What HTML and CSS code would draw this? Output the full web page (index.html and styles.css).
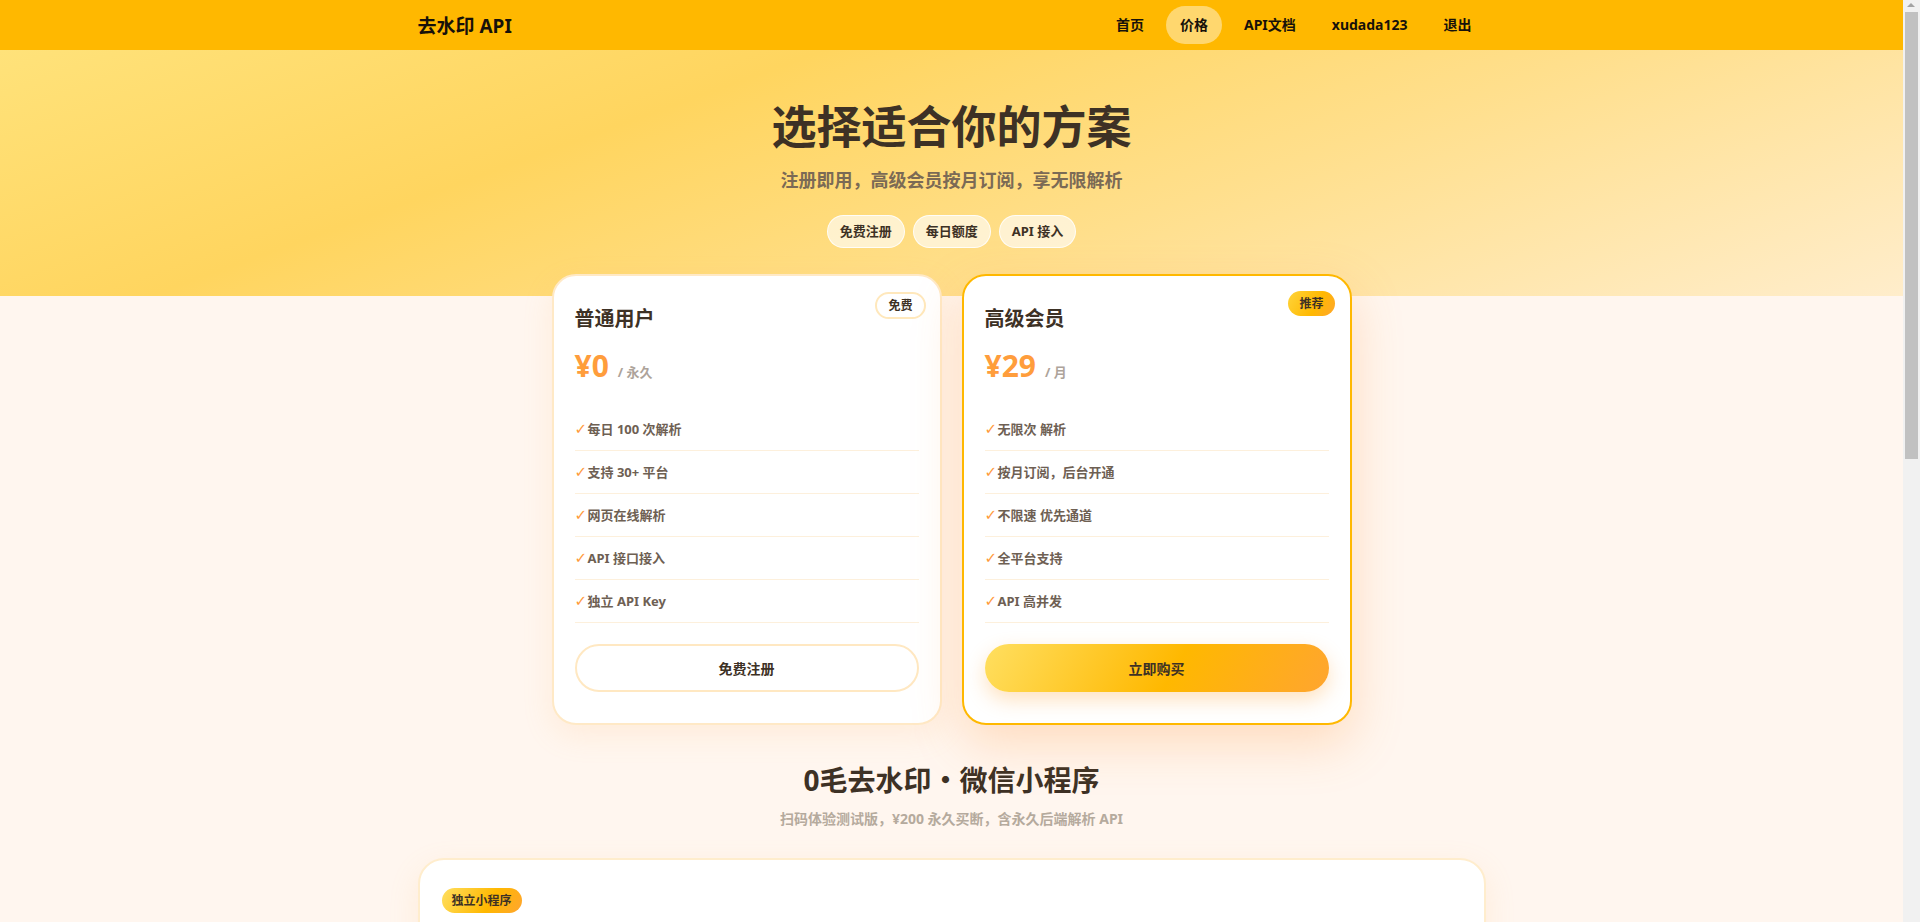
FILE: index.html
```html
<!DOCTYPE html>
<html lang="zh-CN">
<head>
    <meta charset="UTF-8">
    <meta name="viewport" content="width=device-width, initial-scale=1.0">
    <title>价格 - 去水印 API</title>
    <link rel="stylesheet" href="styles.css">
</head>
<body>
    <header class="topbar">
        <div class="container topbar-inner">
            <a class="logo" href="#">去水印 API</a>
            <nav class="nav">
                <a href="#">首页</a>
                <a href="#" class="active">价格</a>
                <a href="#">API文档</a>
                <a href="#">xudada123</a>
                <a href="#">退出</a>
            </nav>
        </div>
    </header>

    <section class="hero">
        <h1>选择适合你的方案</h1>
        <p class="hero-sub">注册即用，高级会员按月订阅，享无限解析</p>
        <div class="hero-tags">
            <span class="tag">免费注册</span>
            <span class="tag">每日额度</span>
            <span class="tag">API 接入</span>
        </div>
    </section>

    <section class="plans">
        <div class="plan">
            <span class="plan-badge">免费</span>
            <h3 class="plan-name">普通用户</h3>
            <div class="plan-price">
                <span class="amount">¥0</span>
                <span class="unit">/ 永久</span>
            </div>
            <ul class="plan-features">
                <li><span class="check">✓</span>每日 100 次解析</li>
                <li><span class="check">✓</span>支持 30+ 平台</li>
                <li><span class="check">✓</span>网页在线解析</li>
                <li><span class="check">✓</span>API 接口接入</li>
                <li><span class="check">✓</span>独立 API Key</li>
            </ul>
            <button type="button" class="plan-btn">免费注册</button>
        </div>

        <div class="plan plan-pro">
            <span class="plan-badge badge-hot">推荐</span>
            <h3 class="plan-name">高级会员</h3>
            <div class="plan-price">
                <span class="amount">¥29</span>
                <span class="unit">/ 月</span>
            </div>
            <ul class="plan-features">
                <li><span class="check">✓</span>无限次 解析</li>
                <li><span class="check">✓</span>按月订阅，后台开通</li>
                <li><span class="check">✓</span>不限速 优先通道</li>
                <li><span class="check">✓</span>全平台支持</li>
                <li><span class="check">✓</span>API 高并发</li>
            </ul>
            <button type="button" class="plan-btn btn-primary">立即购买</button>
        </div>
    </section>

    <section class="mini">
        <h2 class="mini-title">0毛去水印・微信小程序</h2>
        <p class="mini-sub">扫码体验测试版，¥200 永久买断，含永久后端解析 API</p>

        <div class="container">
            <div class="mini-card">
                <span class="mini-badge">独立小程序</span>
                <div class="mini-body">
                    <div class="mini-info">
                        <h3>你的专属去水印小程序</h3>
                        <p>一次买断，永久使用。源码交付、协助上线，后端解析接口永久可用，无需自己维护解析规则。</p>
                        <ul class="plan-features">
                            <li><span class="check">✓</span>完整小程序源码，支持自定义名称与图标</li>
                            <li><span class="check">✓</span>永久后端解析 API，不限调用</li>
                            <li><span class="check">✓</span>支持抖音、快手、小红书等 30+ 平台</li>
                            <li><span class="check">✓</span>内置广告位，可流量主变现</li>
                            <li><span class="check">✓</span>协助部署上线，提供技术支持</li>
                        </ul>
                        <div class="plan-price">
                            <span class="amount">¥200</span>
                            <span class="unit">/ 永久买断</span>
                        </div>
                        <button type="button" class="plan-btn btn-primary mini-btn">联系购买</button>
                    </div>
                    <div class="mini-qr">
                        <div class="qr-box">
                            <svg viewBox="0 0 21 21" width="180" height="180" shape-rendering="crispEdges">
                                <rect width="21" height="21" fill="#fff"/>
                                <path fill="#3d3125" d="M0 0h7v7H0zM14 0h7v7h-7zM0 14h7v7H0z"/>
                                <path fill="#fff" d="M1 1h5v5H1zM15 1h5v5h-5zM1 15h5v5H1z"/>
                                <path fill="#3d3125" d="M2 2h3v3H2zM16 2h3v3h-3zM2 16h3v3H2z"/>
                                <path fill="#3d3125" d="M8 1h1v2H8zM10 0h2v1h-2zM9 4h3v1H9zM8 6h1v2H8zM11 6h2v2h-2zM0 8h2v1H0zM3 8h3v1H3zM9 9h3v3H9zM14 8h2v1h-2zM17 8h4v1h-4zM1 10h2v2H1zM5 10h2v1H5zM13 10h1v3h-1zM15 10h3v1h-3zM19 10h2v2h-2zM4 12h3v1H4zM16 12h2v2h-2zM8 13h2v1H8zM11 14h2v2h-2zM14 14h1v3h-1zM18 15h3v1h-3zM8 16h2v2H8zM16 17h2v2h-2zM11 18h3v1h-3zM19 18h2v3h-2zM8 19h2v2H8zM13 20h3v1h-3z"/>
                            </svg>
                        </div>
                        <p>微信扫码体验测试版</p>
                    </div>
                </div>

                <div class="steps">
                    <div class="step">
                        <span class="step-no">1</span>
                        <h4>扫码体验</h4>
                        <p>先用测试版确认解析效果</p>
                    </div>
                    <div class="step">
                        <span class="step-no">2</span>
                        <h4>联系购买</h4>
                        <p>付款后获取源码与接口密钥</p>
                    </div>
                    <div class="step">
                        <span class="step-no">3</span>
                        <h4>部署上线</h4>
                        <p>协助配置域名与小程序后台</p>
                    </div>
                    <div class="step">
                        <span class="step-no">4</span>
                        <h4>永久使用</h4>
                        <p>后端解析持续维护更新</p>
                    </div>
                </div>
            </div>
        </div>
    </section>

    <footer class="footer">
        <p>© 去水印 API · 仅供学习交流使用</p>
    </footer>
</body>
</html>
```

FILE: styles.css
```css
* {
    box-sizing: border-box;
}

/* classic scrollbar strip on the right, as in the desktop browser */
html {
    background-color: #f1f1f1;
}

html::before {
    content: "";
    position: fixed;
    top: 3px;
    right: 5px;
    border-left: 4px solid transparent;
    border-right: 4px solid transparent;
    border-bottom: 4px solid #a3a3a3;
}

html::after {
    content: "";
    position: fixed;
    top: 12px;
    right: 2px;
    width: 13px;
    height: 447px;
    background-color: #c1c1c1;
}

body {
    margin: 0 17px 0 0;
    font-family: "Noto Sans", "Noto Sans CJK SC", sans-serif;
    background-color: #fff6ef;
    color: #3d3125;
}

a {
    text-decoration: none;
    color: inherit;
}

.container {
    max-width: 1100px;
    margin: 0 auto;
    padding: 0 16px;
}

/* top bar */
.topbar {
    background-color: #ffb800;
}

.topbar-inner {
    height: 50px;
    display: flex;
    align-items: center;
    justify-content: space-between;
}

.logo {
    font-size: 19px;
    font-weight: 700;
    color: #17110a;
}

.nav {
    display: flex;
    gap: 8px;
}

.nav a {
    height: 38px;
    line-height: 38px;
    padding: 0 14px;
    border-radius: 19px;
    font-size: 14px;
    font-weight: 700;
    color: #17110a;
}

.nav a.active {
    background-color: #ffd76e;
}

/* hero */
.hero {
    text-align: center;
    padding: 50px 0 48px;
    background: linear-gradient(160deg, #ffe27a 0%, #ffd55f 32%, #ffdf8c 62%, #ffedcb 100%);
}

.hero h1 {
    margin: 0;
    font-size: 45px;
    line-height: 1.2;
    font-weight: 700;
    color: #3d3125;
}

.hero-sub {
    margin: 13px 0 0;
    font-size: 18px;
    line-height: 1.5;
    font-weight: 700;
    color: #7b6a55;
}

.hero-tags {
    margin-top: 21px;
    display: flex;
    justify-content: center;
    gap: 8px;
}

.tag {
    height: 33px;
    line-height: 31px;
    padding: 0 12px;
    border-radius: 17px;
    font-size: 13px;
    font-weight: 700;
    color: #3d3125;
    background-color: rgba(255, 255, 255, 0.62);
    border: 1px solid rgba(255, 255, 255, 0.85);
}

/* plans */
.plans {
    max-width: 800px;
    margin: -22px auto 0;
    display: grid;
    grid-template-columns: 1fr 1fr;
    gap: 20px;
}

.plan {
    position: relative;
    background-color: #fff;
    border: 2px solid #ffe9c6;
    border-radius: 24px;
    padding: 30px 21px 31px;
    box-shadow: 0 10px 30px rgba(255, 186, 110, 0.16);
}

.plan-pro {
    border-color: #ffb800;
    box-shadow: 0 18px 50px rgba(255, 150, 60, 0.28);
}

.plan-badge {
    position: absolute;
    top: 16px;
    right: 14px;
    height: 27px;
    line-height: 23px;
    padding: 0 11px;
    border-radius: 14px;
    border: 2px solid #ffe8bc;
    background-color: #fff;
    font-size: 12px;
    font-weight: 700;
    color: #3d3125;
}

.badge-hot {
    top: 15px;
    right: 15px;
    height: 25px;
    line-height: 25px;
    border: none;
    padding: 0 11px;
    background: linear-gradient(120deg, #ffd43b, #ffb800 60%, #ffa62e);
}

.plan-name {
    margin: 0;
    font-size: 20px;
    line-height: 26px;
    font-weight: 700;
    color: #3d3125;
}

.plan-price {
    margin-top: 16px;
    display: flex;
    align-items: baseline;
    gap: 9px;
}

.amount {
    font-size: 30px;
    line-height: 36px;
    font-weight: 700;
    color: #ff9d3c;
}

.unit {
    font-size: 13px;
    font-weight: 700;
    color: #ada39a;
}

.plan-features {
    list-style: none;
    margin: 24px 0 0;
    padding: 0;
}

.plan-features li {
    padding: 12px 0;
    line-height: 18px;
    height: 43px;
    font-size: 13px;
    font-weight: 700;
    color: #6e6053;
    border-bottom: 1px solid #fdf0dc;
}

.check {
    display: inline-block;
    vertical-align: top;
    width: 13px;
    line-height: 18px;
    color: #ff9a3c;
    font-family: "DejaVu Sans", sans-serif;
    font-size: 15px;
}

.plan-btn {
    display: block;
    width: 100%;
    height: 48px;
    margin-top: 21px;
    border-radius: 24px;
    border: 2px solid #ffe8c2;
    background-color: #fff;
    font-family: inherit;
    font-size: 14px;
    font-weight: 700;
    color: #3d3125;
    cursor: pointer;
}

.btn-primary {
    border: none;
    background: linear-gradient(120deg, #ffdf60 0%, #ffb800 55%, #ffa530 100%);
    box-shadow: 0 8px 20px rgba(255, 165, 60, 0.32);
}

/* mini program */
.mini {
    padding-bottom: 60px;
}

.mini-title {
    margin: 37px 0 0;
    text-align: center;
    font-size: 28px;
    line-height: 1.3;
    font-weight: 700;
    color: #3d3125;
}

.mini-sub {
    margin: 10px 0 29px;
    text-align: center;
    font-size: 14px;
    line-height: 1.5;
    font-weight: 700;
    color: #b5aa9d;
}

.mini-card {
    background-color: #fff;
    border: 2px solid #ffedcd;
    border-radius: 26px;
    padding: 28px 22px 40px;
    box-shadow: 0 10px 30px rgba(255, 186, 110, 0.16);
}

.mini-badge {
    display: inline-block;
    height: 25px;
    line-height: 25px;
    padding: 0 10px;
    border-radius: 13px;
    font-size: 12px;
    font-weight: 700;
    color: #3d3125;
    background: linear-gradient(120deg, #ffdf60 0%, #ffb800 60%, #ffa530 100%);
}

.mini-body {
    margin-top: 24px;
    display: flex;
    gap: 60px;
}

.mini-info {
    flex: 1;
}

.mini-info h3 {
    margin: 0;
    font-size: 22px;
    line-height: 30px;
}

.mini-info p {
    margin: 12px 0 0;
    font-size: 14px;
    line-height: 1.8;
    color: #7b6a55;
}

.mini-info .plan-price {
    margin-top: 24px;
}

.mini-btn {
    width: 280px;
}

.mini-qr {
    width: 300px;
    text-align: center;
}

.qr-box {
    padding: 30px;
    border-radius: 20px;
    background-color: #fff8ea;
    border: 2px dashed #ffd98a;
}

.mini-qr p {
    margin: 14px 0 0;
    font-size: 14px;
    font-weight: 700;
    color: #7b6a55;
}

.steps {
    margin-top: 36px;
    display: grid;
    grid-template-columns: repeat(4, 1fr);
    gap: 16px;
}

.step {
    padding: 20px;
    border-radius: 18px;
    background-color: #fff8ec;
    border: 1px solid #ffedcd;
}

.step-no {
    display: inline-block;
    width: 28px;
    height: 28px;
    line-height: 28px;
    text-align: center;
    border-radius: 50%;
    font-size: 14px;
    font-weight: 700;
    background: linear-gradient(120deg, #ffdf60, #ffa530);
}

.step h4 {
    margin: 12px 0 0;
    font-size: 16px;
}

.step p {
    margin: 6px 0 0;
    font-size: 13px;
    line-height: 1.6;
    color: #8a7a66;
}

.footer {
    padding: 30px 0 40px;
    text-align: center;
    font-size: 13px;
    color: #b5aa9d;
}

.footer p {
    margin: 0;
}
```
